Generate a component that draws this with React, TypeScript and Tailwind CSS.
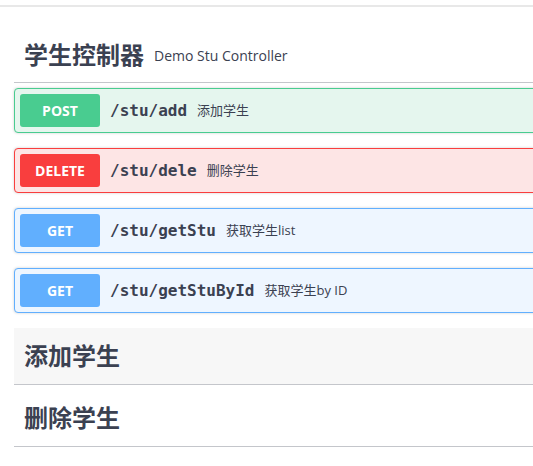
import React from "react";

type Op = {
  method: "POST" | "DELETE" | "GET";
  path: string;
  summary: string;
};

const ops: Op[] = [
  { method: "POST", path: "/stu/add", summary: "添加学生" },
  { method: "DELETE", path: "/stu/dele", summary: "删除学生" },
  { method: "GET", path: "/stu/getStu", summary: "获取学生list" },
  { method: "GET", path: "/stu/getStuById", summary: "获取学生by ID" },
];

// block + badge colours per http method
const methodStyle = {
  POST: { block: "bg-[#e5f6ee] border-[#49cc90]", badge: "bg-[#49cc90]" },
  DELETE: { block: "bg-[#fde5e5] border-[#f93e3e]", badge: "bg-[#f93e3e]" },
  GET: { block: "bg-[#eef6ff] border-[#61affe]", badge: "bg-[#61affe]" },
};

const sans = "font-['Open_Sans','Noto_Sans','Noto_Sans_CJK_SC',sans-serif]";

function OpBlock({ op }: { op: Op }) {
  const s = methodStyle[op.method];
  return (
    <div
      className={`mb-[15px] flex items-center rounded-[4px] border p-[5px] shadow-[0_0_3px_rgba(0,0,0,0.19)] ${s.block}`}
    >
      <span
        className={`flex h-[33px] w-[80px] shrink-0 items-center justify-center rounded-[3px] text-[14px] font-bold text-white ${s.badge} ${sans}`}
      >
        {op.method}
      </span>
      <span className="px-[10px] font-['DejaVu_Sans_Mono',monospace] text-[16px] font-semibold text-[#3b4151]">
        {op.path}
      </span>
      <span className={`text-[13px] text-[#3b4151] ${sans}`}>{op.summary}</span>
    </div>
  );
}

export default function App() {
  return (
    <div className="min-h-[466px] w-[533px] overflow-hidden bg-white">
      <div className="h-[7px] border-b-2 border-[#e8e8e8]" />
      <div className="w-[580px] pl-[14px]">
        <div className="mt-[25px] mb-[5px] flex items-center border-b border-[#c4c6cb] pt-[8px] pb-[12px] pl-[10px]">
          <span className={`text-[24px] leading-[30px] font-bold text-[#3b4151] ${sans}`}>
            学生控制器
          </span>
          <span className={`ml-[10px] text-[14px] text-[#3b4151] ${sans}`}>
            Demo Stu Controller
          </span>
        </div>

        {ops.map((op) => (
          <OpBlock key={op.path} op={op} />
        ))}

        <div className="flex h-[57px] items-center border-b border-[#c4c6cb] bg-[#f7f7f7] pl-[10px]">
          <span className={`text-[24px] font-bold text-[#3b4151] ${sans}`}>添加学生</span>
        </div>
        <div className="flex h-[62px] items-center border-b border-[#c4c6cb] pt-[4px] pl-[10px]">
          <span className={`text-[24px] font-bold text-[#3b4151] ${sans}`}>删除学生</span>
        </div>
      </div>
    </div>
  );
}
